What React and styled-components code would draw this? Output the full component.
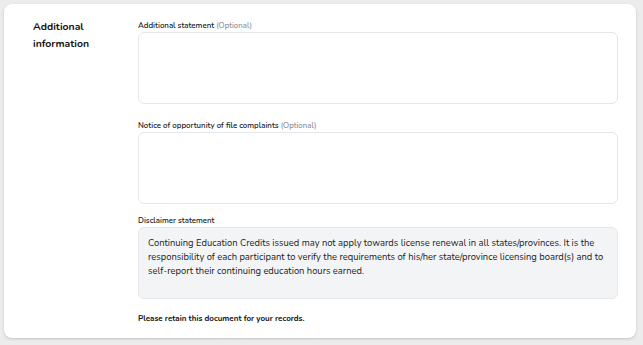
import React from "react";
import styled, { createGlobalStyle } from "styled-components";

const Global = createGlobalStyle`
  html, body { margin: 0; padding: 0; background: #ececec; }
  body { font-family: "Nunito", "Lato", "Noto Sans", sans-serif; color: #111; }
  * { box-sizing: border-box; }
`;

const Page = styled.div`
  padding: 4px 7px 7px 4px;
  height: 345px;
`;

const Card = styled.section`
  background: #fff;
  border-radius: 8px;
  box-shadow: 0 1px 3px rgba(0,0,0,0.12), 0 1px 2px rgba(0,0,0,0.06);
  display: grid;
  grid-template-columns: 76px 480px;
  column-gap: 29px;
  align-items: start;
  padding: 16px 0 0 29px;
  height: 334px;
`;

const SectionTitle = styled.h2`
  margin: -2px 0 0;
  font-size: 10.4px;
  font-weight: 700;
  line-height: 17px;
  color: #111;
`;

const Fields = styled.div`
  display: flex;
  flex-direction: column;
`;

const Field = styled.div`
  display: flex;
  flex-direction: column;
  gap: 1px;
  margin-bottom: ${p => p.$gap || 0}px;
`;

const Label = styled.label`
  font-size: 7.9px;
  font-weight: 600;
  line-height: 11px;
  color: #222;
`;

const Optional = styled.span`
  font-weight: 400;
  color: #7c7c84;
`;

const TextArea = styled.textarea`
  display: block;
  width: 480px;
  height: 72px;
  border: 1px solid #e4e6ea;
  border-radius: 6px;
  resize: none;
  background: #fff;
  outline: none;
  font-family: inherit;
`;

const Disclaimer = styled.div`
  width: 480px;
  height: 72px;
  background: #f3f4f6;
  border: 1px solid #e7e8eb;
  border-radius: 6px;
  padding: 8px 9px;
  font-size: 9.4px;
  line-height: 14px;
  color: #222;
`;

const Note = styled.p`
  margin: 14px 0 0;
  font-size: 8px;
  font-weight: 700;
  line-height: 11px;
  color: #111;
`;

export default function App() {
  return (
    <>
      <Global />
      <Page>
        <Card>
          <SectionTitle>Additional<br />information</SectionTitle>
          <Fields>
            <Field $gap={16}>
              <Label>Additional statement <Optional>(Optional)</Optional></Label>
              <TextArea />
            </Field>
            <Field $gap={11}>
              <Label>Notice of opportunity of file complaints <Optional>(Optional)</Optional></Label>
              <TextArea />
            </Field>
            <Field>
              <Label>Disclaimer statement</Label>
              <Disclaimer>
                Continuing Education Credits issued may not apply towards license renewal in all states/provinces. It is the responsibility of each participant to verify the requirements of his/her state/province licensing board(s) and to self-report their continuing education hours earned.
              </Disclaimer>
            </Field>
            <Note>Please retain this document for your records.</Note>
          </Fields>
        </Card>
      </Page>
    </>
  );
}
